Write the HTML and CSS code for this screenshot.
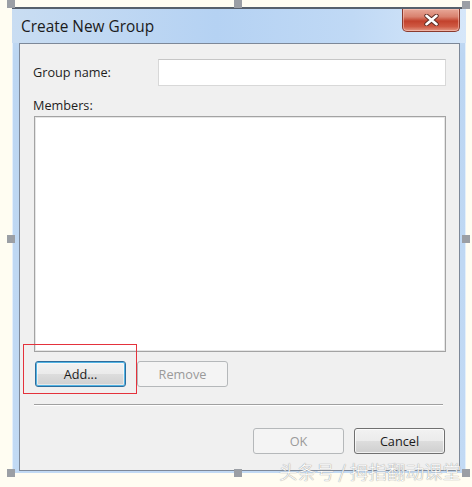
FILE: index.html
```html
<!DOCTYPE html>
<html>
<head>
<meta charset="utf-8">
<link rel="stylesheet" href="styles.css">
</head>
<body>
<div class="canvas">
  <div class="window">
    <div class="titlebar">
      <div class="title">Create New Group</div>
      <div class="close-btn">
        <svg width="17" height="12" viewBox="0 0 17 12">
          <path d="M3.5 1.8 L13.5 10.2 M13.5 1.8 L3.5 10.2" stroke="#5a2a22" stroke-width="4.4" stroke-linecap="round"/>
          <path d="M3.5 1.8 L13.5 10.2 M13.5 1.8 L3.5 10.2" stroke="#ffffff" stroke-width="2.6" stroke-linecap="round"/>
        </svg>
      </div>
    </div>
    <div class="client">
      <div class="row-name">
        <span class="label">Group name:</span>
        <div class="input"></div>
      </div>
      <div class="label members-label">Members:</div>
      <div class="listbox"></div>
      <div class="row-buttons">
        <div class="btn btn-focus">Add...</div>
        <div class="btn btn-disabled">Remove</div>
      </div>
      <div class="separator"></div>
      <div class="row-footer">
        <div class="btn btn-disabled">OK</div>
        <div class="btn">Cancel</div>
      </div>
    </div>
  </div>

  <div class="handle h-tl"></div>
  <div class="handle h-tm"></div>
  <div class="handle h-tr"></div>
  <div class="handle h-ml"></div>
  <div class="handle h-mr"></div>
  <div class="handle h-bl"></div>
  <div class="handle h-bm"></div>
  <div class="handle h-br"></div>

  <div class="annotation"></div>
  <div class="watermark">头条号 / 拇指翻动课堂</div>
</div>
</body>
</html>
```

FILE: styles.css
```css
html, body {
  margin: 0;
  padding: 0;
  background: #fffdf2;
}

.canvas {
  position: relative;
  width: 472px;
  height: 487px;
  overflow: hidden;
  font-family: "Open Sans", "Noto Sans", sans-serif;
  color: #1e1e1e;
}

.window {
  box-sizing: border-box;
  margin: 7px 0 0 12px;
  width: 454px;
  height: 466px;
  border-top: 2px solid #56606c;
  padding: 0 6px 2px 7px;
  background: linear-gradient(to bottom, #c6dcf3 0%, #bcd6f2 10%, #c2daf4 100%);
  box-shadow: inset 1px 0 0 #e4effa, inset -1px 0 0 #e4effa;
}

.titlebar {
  height: 34px;
  display: flex;
  justify-content: space-between;
  align-items: flex-start;
  background: linear-gradient(to right, #c9ddf2 0%, #b5d2f3 45%, #c0d9f5 75%, #d6e7f9 100%);
  margin: 0 -6px 0 -7px;
  padding: 0 6px 0 7px;
}

.title {
  padding: 7px 0 0 2px;
  font-size: 15.4px;
  line-height: 21px;
  color: #1b1b1b;
}

.close-btn {
  box-sizing: border-box;
  width: 58px;
  height: 23px;
  border: 1px solid #8a3a2e;
  border-top: none;
  border-radius: 0 0 5px 5px;
  background: linear-gradient(to bottom, #e8a898 0%, #d9826f 35%, #c2412c 55%, #cf5a44 80%, #e39a86 100%);
  display: flex;
  align-items: center;
  justify-content: center;
  box-shadow: inset 0 0 0 1px rgba(255, 210, 200, 0.5);
}

.client {
  box-sizing: border-box;
  height: 428px;
  border: 1px solid #7d8898;
  background: #f0f0f0;
  padding: 15px 13px 15px 14px;
  font-size: 12.7px;
}

.row-name {
  display: flex;
  justify-content: space-between;
  align-items: center;
  height: 27px;
}

.label {
  line-height: 17px;
  margin-left: -1px;
}

.input {
  box-sizing: border-box;
  width: 288px;
  height: 27px;
  background: #ffffff;
  border: 1px solid #d8d8d8;
  border-top-color: #c6c6c6;
}

.members-label {
  margin: 11px 0 2px -1px;
  height: 17px;
}

.listbox {
  box-sizing: border-box;
  height: 236px;
  background: #ffffff;
  border: 1px solid #a3a3a3;
  box-shadow: inset 0 0 0 1px #e6e6e6;
}

.row-buttons {
  display: flex;
  gap: 11px;
  margin: 9px 0 0 1px;
}

.row-footer {
  display: flex;
  gap: 10px;
  justify-content: flex-end;
  margin: 22px 1px 0 0;
}

.btn {
  box-sizing: border-box;
  width: 91px;
  height: 26px;
  border: 1px solid #707070;
  border-radius: 3px;
  background: linear-gradient(to bottom, #f2f2f2 0%, #ebebeb 49%, #dddddd 51%, #cfcfcf 100%);
  box-shadow: inset 0 0 0 1px rgba(255, 255, 255, 0.7);
  display: flex;
  align-items: center;
  justify-content: center;
  font-size: 12.7px;
  color: #1b1b1b;
}

.btn-focus {
  border: 1px solid #2e6d9c;
  box-shadow: inset 0 0 0 1px #52b4e4, inset 0 0 0 2px rgba(255, 255, 255, 0.5);
}

.btn-disabled {
  border-color: #b5b8ba;
  background: #f4f4f4;
  box-shadow: none;
  color: #9a9a9a;
}

.separator {
  margin: 17px 2px 0 0;
  height: 1px;
  width: 409px;
  background: #a0a0a0;
  border-bottom: 1px solid #ffffff;
}

.handle {
  position: absolute;
  width: 8px;
  height: 8px;
  background: #9b9fa5;
}
.h-tl { left: 7px; top: 0; }
.h-tm { left: 234px; top: 0; }
.h-tr { left: 462px; top: 1px; }
.h-ml { left: 7px; top: 235px; }
.h-mr { left: 462px; top: 235px; }
.h-bl { left: 7px; top: 469px; }
.h-bm { left: 234px; top: 469px; }
.h-br { left: 462px; top: 469px; }

.annotation {
  position: absolute;
  left: 23px;
  top: 344px;
  width: 112px;
  height: 48px;
  border: 1px solid #e4323c;
}

.watermark {
  position: absolute;
  left: 279px;
  top: 459px;
  font-family: "Noto Sans CJK SC", sans-serif;
  font-weight: 300;
  font-size: 18.5px;
  line-height: 24px;
  color: #ffffff;
  text-shadow: 0 0 1px #9a9a9a, 0 0 1px #9a9a9a;
  white-space: nowrap;
}
```
